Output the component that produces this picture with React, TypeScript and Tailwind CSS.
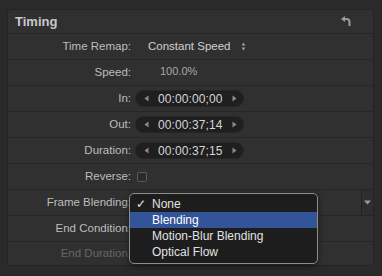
import React from "react";

const LeftTri = () => (
  <svg width="5" height="7" viewBox="0 0 5 7"><path d="M4.5 0.5 L0.5 3.5 L4.5 6.5 Z" fill="#8a8a8a" /></svg>
);
const RightTri = () => (
  <svg width="5" height="7" viewBox="0 0 5 7"><path d="M0.5 0.5 L4.5 3.5 L0.5 6.5 Z" fill="#8a8a8a" /></svg>
);

function Stepper({ value }: { value: string }) {
  return (
    <div className="ml-[4px] w-[109px] h-[17px] rounded-full bg-[#1f1f20] border border-[#262626] flex items-center pl-[8px] pr-[6px]">
      <LeftTri />
      <span className="ml-[9px] text-[12px] text-[#d6d6d6] tracking-[0.1px]">{value}</span>
      <span className="ml-auto"><RightTri /></span>
    </div>
  );
}

function Row({ label, children, dim, last, extra }: { label: string; children?: React.ReactNode; dim?: boolean; last?: boolean; extra?: React.ReactNode }) {
  return (
    <div className={`relative flex items-center ${last ? "flex-1" : "h-[26px] border-b border-[#262627]"}`}>
      <div className={`w-[123px] text-right text-[11.5px] ${dim ? "text-[#666666]" : "text-[#bdbdbd]"}`}>{label}</div>
      {children}
      {extra}
    </div>
  );
}

export default function App() {
  return (
    <div className="relative w-[382px] h-[276px] bg-[#2a2a2b] pt-[9px] pl-[7px] font-['Liberation_Sans',Arial,sans-serif] overflow-hidden">
      <div className="w-[367px] h-[257px] bg-[#303031] rounded-[4px] border border-[#242425] flex flex-col overflow-hidden">
        <div className="h-[24px] flex items-center justify-between pl-[7px] pr-[22px] border-b border-[#262627]">
          <span className="text-[13px] font-bold text-[#c9c9c9]">Timing</span>
          <svg width="10" height="11" viewBox="0 0 10 11">
            <path d="M3.5 3 H5.5 A3 3 0 0 1 8.5 6 V10" fill="none" stroke="#9a9a9a" strokeWidth="2" />
            <path d="M0 3 L4 0 L4 6 Z" fill="#9a9a9a" />
          </svg>
        </div>
        <Row label="Time Remap:">
          <span className="ml-[17px] text-[11.5px] text-[#d0d0d0]">Constant Speed</span>
          <svg className="ml-[11px]" width="5" height="9" viewBox="0 0 5 9">
            <path d="M0.5 3.5 L2.5 0.5 L4.5 3.5 Z M0.5 5.5 L2.5 8.5 L4.5 5.5 Z" fill="#9a9a9a" />
          </svg>
        </Row>
        <Row label="Speed:">
          <span className="ml-[29px] -mt-[2px] text-[11px] text-[#a8a8a8]">100.0%</span>
        </Row>
        <Row label="In:">
          <Stepper value="00:00:00;00" />
        </Row>
        <Row label="Out:">
          <Stepper value="00:00:37;14" />
        </Row>
        <Row label="Duration:">
          <Stepper value="00:00:37;15" />
        </Row>
        <Row label="Reverse:">
          <div className="ml-[6px] w-[10px] h-[10px] rounded-[2px] bg-[#2a2a2a] border border-[#5a5a5a]" />
        </Row>
        <Row
          label="Frame Blending:"
          extra={
            <div className="absolute right-0 top-0 bottom-0 w-[12px] border-l border-[#222223] bg-[#2e2e2f] flex items-center justify-center">
              <svg width="7" height="5" viewBox="0 0 7 5"><path d="M0 0.5 L7 0.5 L3.5 4.5 Z" fill="#9a9a9a" /></svg>
            </div>
          }
        />
        <Row label="End Condition:" />
        <Row label="End Duration:" dim last />
      </div>

      <div className="absolute left-[129px] top-[193px] w-[189px] h-[71px] rounded-[5px] border border-[#8c8c8c] bg-[#1d1d1e] pt-[2px] text-[12px] text-[#e2e2e2] shadow-[0_2px_6px_rgba(0,0,0,0.5)]">
        <div className="relative h-[16px] flex items-center pl-[22px]">
          <span className="absolute left-[6px] text-[12px]">✓</span>
          None
        </div>
        <div className="h-[16px] flex items-center pl-[22px] bg-[#34549a] text-white">Blending</div>
        <div className="h-[16px] flex items-center pl-[22px]">Motion-Blur Blending</div>
        <div className="h-[16px] flex items-center pl-[22px]">Optical Flow</div>
      </div>
    </div>
  );
}
